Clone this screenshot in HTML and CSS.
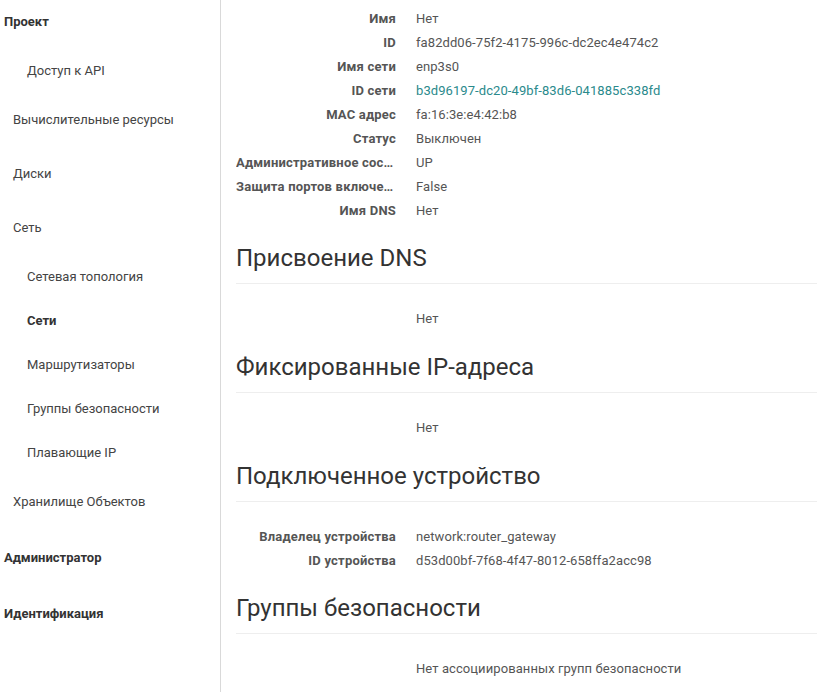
FILE: index.html
```html
<!DOCTYPE html>
<html lang="ru">
<head>
<meta charset="utf-8">
<title>Сеть</title>
<link rel="stylesheet" href="styles.css">
</head>
<body>
<div class="layout">
  <nav class="sidebar">
    <div class="panel-title first">Проект</div>
    <div class="nav-sub">Доступ к API</div>
    <div class="nav-item">Вычислительные ресурсы</div>
    <div class="nav-item">Диски</div>
    <div class="nav-item">Сеть</div>
    <div class="nav-sub">Сетевая топология</div>
    <div class="nav-sub active">Сети</div>
    <div class="nav-sub">Маршрутизаторы</div>
    <div class="nav-sub">Группы безопасности</div>
    <div class="nav-sub">Плавающие IP</div>
    <div class="nav-item">Хранилище Объектов</div>
    <div class="panel-title">Администратор</div>
    <div class="panel-title">Идентификация</div>
  </nav>
  <main class="content">
    <dl class="details first-dl">
      <dt>Имя</dt><dd>Нет</dd>
      <dt>ID</dt><dd>fa82dd06-75f2-4175-996c-dc2ec4e474c2</dd>
      <dt>Имя сети</dt><dd>enp3s0</dd>
      <dt>ID сети</dt><dd><a class="link" href="#">b3d96197-dc20-49bf-83d6-041885c338fd</a></dd>
      <dt>MAC адрес</dt><dd>fa:16:3e:e4:42:b8</dd>
      <dt>Статус</dt><dd>Выключен</dd>
      <dt>Административное состояние</dt><dd>UP</dd>
      <dt>Защита портов включена</dt><dd>False</dd>
      <dt>Имя DNS</dt><dd>Нет</dd>
    </dl>

    <h3 class="section-title first-title">Присвоение DNS</h3>
    <hr class="divider">
    <dl class="details">
      <dt></dt><dd>Нет</dd>
    </dl>

    <h3 class="section-title">Фиксированные IP-адреса</h3>
    <hr class="divider">
    <dl class="details">
      <dt></dt><dd>Нет</dd>
    </dl>

    <h3 class="section-title">Подключенное устройство</h3>
    <hr class="divider">
    <dl class="details">
      <dt>Владелец устройства</dt><dd>network:router_gateway</dd>
      <dt>ID устройства</dt><dd>d53d00bf-7f68-4f47-8012-658ffa2acc98</dd>
    </dl>

    <h3 class="section-title last-title">Группы безопасности</h3>
    <hr class="divider">
    <dl class="details">
      <dt></dt><dd>Нет ассоциированных групп безопасности</dd>
    </dl>
  </main>
</div>
</body>
</html>
```

FILE: styles.css
```css
* { box-sizing: border-box; }
html, body {
  margin: 0;
  padding: 0;
  background: #fff;
}
body {
  font-family: Roboto, "Liberation Sans", Arial, sans-serif;
  font-size: 13px;
  color: #555;
  height: 692px;
  overflow: hidden;
}
.layout {
  display: flex;
  align-items: stretch;
  min-height: 692px;
}
.sidebar {
  width: 221px;
  flex: 0 0 221px;
  border-right: 1px solid #d9d9d9;
  color: #444;
  line-height: 20px;
  padding-top: 1px;
}
.panel-title {
  padding: 19px 0 17px 4px;
  font-weight: 700;
  color: #333;
}
.panel-title.first { padding-top: 11px; }
.nav-item {
  padding: 17px 0 17px 13px;
}
.nav-sub {
  padding: 12px 0 12px 27px;
}
.nav-sub.active {
  font-weight: 700;
  color: #333;
}
.content {
  flex: 1;
  padding: 0 1px 0 15px;
  min-width: 0;
}
.details {
  display: grid;
  grid-template-columns: 160px 1fr;
  column-gap: 20px;
  margin: 0;
}
.details.first-dl { margin-top: 7px; }
.details dt {
  font-weight: 700;
  color: #555;
  text-align: right;
  line-height: 24px;
  letter-spacing: 0.2px;
  white-space: nowrap;
  overflow: hidden;
  text-overflow: ellipsis;
}
.details dd {
  margin: 0;
  line-height: 24px;
  color: #555;
  letter-spacing: 0.08px;
}
.link {
  color: #2a8a8c;
  text-decoration: none;
}
.section-title {
  margin: 24px 0 0;
  font-size: 24px;
  font-weight: 400;
  line-height: 24px;
  color: #333;
}
.section-title.first-title { margin-top: 23px; }
.section-title.last-title { margin-top: 23px; }
.divider {
  border: 0;
  border-top: 1px solid #eee;
  margin: 13px 0 23px;
}
```
